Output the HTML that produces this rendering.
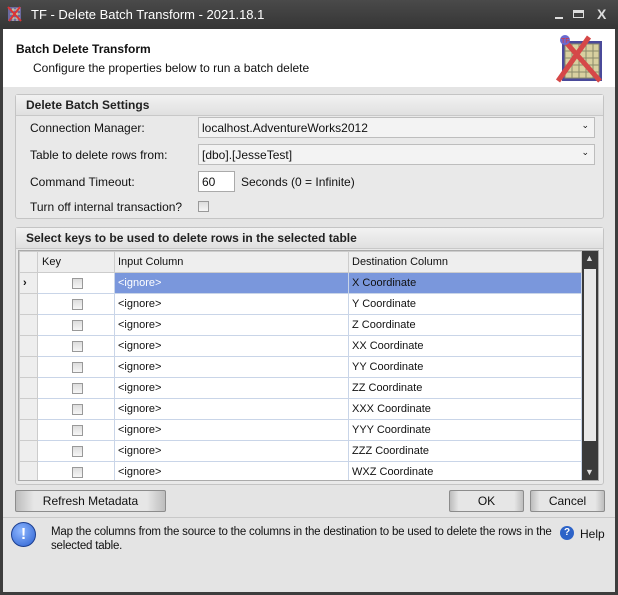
<!DOCTYPE html><html><head><style>
*{box-sizing:border-box;margin:0;padding:0}
body{width:618px;height:595px;background:#3d3d3d;font-family:"Liberation Sans",sans-serif;font-size:11px;color:#111;position:relative;overflow:hidden}
.a{position:absolute}
.title{left:0;top:0;width:618px;height:29px;background:linear-gradient(#4a4a4a,#353535);color:#fff;font-size:13px}
.main{left:3px;top:29px;width:612px;height:563px;background:#e4e4e4}
.hdr{left:3px;top:29px;width:612px;height:58px;background:#fff}
.grp{border:1px solid #c4c4c4;background:#e9e9e9;border-radius:3px}
.gh{background:linear-gradient(#f2f2f2,#e0e0e0);border-bottom:1px solid #c8c8c8;font-weight:bold;font-size:12px;padding:3px 10px;color:#222}
.combo{background:#f3f3f3;border:1px solid #bdbdbd;padding:3px 3px}
.btn{border:1px solid #8c8c8c;background:linear-gradient(90deg,#bdbdbd,#e6e6e6 12%,#e6e6e6 88%,#bdbdbd);text-align:center;line-height:20px;font-size:12px;border-radius:2px}
table{border-collapse:collapse;font-size:11px}
td{height:21px;border:1px solid #c9d5e8;padding-left:3px;background:#fff;line-height:12px;padding-top:0;padding-bottom:0}
td.rh{background:#eee;border-color:#ccc}
.cb{display:inline-block;width:11px;height:11px;border:1px solid #999;background:linear-gradient(#ddd,#f6f6f6);vertical-align:middle}
</style></head><body>
<div class="a title"><svg class="a" style="left:6px;top:5px" width="16" height="17"><rect x="2" y="2" width="13" height="14" fill="#6c6aa0"/><path d="M4 5h10M4 9h10M4 13h10M7 3v13M11 3v13" stroke="#d9d3a8"/><path d="M2 2L15 16M14 2L3 16" stroke="#d33" stroke-width="2"/></svg><span class="a" style="left:31px;top:7px">TF - Delete Batch Transform - 2021.18.1</span>
<span class="a" style="left:555px;top:8px;width:8px;height:11px;border-bottom:2px solid #ddd"></span><span class="a" style="left:573px;top:10px;width:11px;height:8px;border:1px solid #ddd;border-top-width:3px"></span><span class="a" style="left:597px;top:6px;font-size:14px;color:#ddd;font-weight:bold">X</span></div>
<div class="a main"></div>
<div class="a hdr"></div>
<div class="a" style="left:16px;top:42px;font-weight:bold;font-size:12px">Batch Delete Transform</div>
<div class="a" style="left:33px;top:61px;font-size:12px">Configure the properties below to run a batch delete</div>
<svg class="a" style="left:555px;top:33px" width="50" height="50"><rect x="7" y="8" width="40" height="40" fill="#4a4a9a"/><g stroke="#8a8a6a"><rect x="10" y="11" width="34" height="34" fill="#d8d0a0"/><path d="M10 18h34M10 25h34M10 32h34M10 39h34M17 11v34M24 11v34M31 11v34M38 11v34"/></g><path d="M3 48L34 4M8 6L45 48" stroke="#d54848" stroke-width="5"/><circle cx="10" cy="7" r="5" fill="#6a6ad0"/><text x="6" y="10" font-size="7" fill="#d33">TF</text></svg>
<div class="a grp" style="left:15px;top:94px;width:589px;height:125px"><div class="gh">Delete Batch Settings</div></div>
<div class="a" style="left:30px;top:121px;font-size:12px">Connection Manager:</div>
<div class="a combo" style="left:198px;top:117px;width:397px;height:21px;font-size:12px">localhost.AdventureWorks2012<span class="a" style="right:5px;top:2px;font-size:9px">&#8964;</span></div>
<div class="a" style="left:30px;top:148px;font-size:12px">Table to delete rows from:</div>
<div class="a combo" style="left:198px;top:144px;width:397px;height:21px;font-size:12px">[dbo].[JesseTest]<span class="a" style="right:5px;top:2px;font-size:9px">&#8964;</span></div>
<div class="a" style="left:30px;top:175px;font-size:12px">Command Timeout:</div>
<div class="a" style="left:198px;top:171px;width:37px;height:21px;background:#fff;border:1px solid #aaa;padding:3px;font-size:12px">60</div>
<div class="a" style="left:241px;top:175px;font-size:12px">Seconds (0 = Infinite)</div>
<div class="a" style="left:30px;top:200px;font-size:12px">Turn off internal transaction?</div>
<span class="a cb" style="left:198px;top:201px"></span>
<div class="a grp" style="left:15px;top:227px;width:589px;height:258px"><div class="gh">Select keys to be used to delete rows in the selected table</div></div>
<div class="a" style="left:18px;top:250px;width:581px;height:231px;background:#fff;border:1px solid #aaa;overflow:hidden">
<table style="width:563px"><tr style="background:#eee"><td class="rh" style="width:18px;height:19px"></td><td class="rh" style="width:77px;padding-left:4px">Key</td><td class="rh" style="width:234px">Input Column</td><td class="rh">Destination Column</td></tr>
<tr><td class="rh" style="font-weight:bold">›</td><td style="text-align:center"><span class="cb"></span></td><td style="background:#7a97dc;color:#fff">&lt;ignore&gt;</td><td style="background:#7a97dc">X Coordinate</td></tr>
<tr><td class="rh"></td><td style="text-align:center"><span class="cb"></span></td><td>&lt;ignore&gt;</td><td>Y Coordinate</td></tr>
<tr><td class="rh"></td><td style="text-align:center"><span class="cb"></span></td><td>&lt;ignore&gt;</td><td>Z Coordinate</td></tr>
<tr><td class="rh"></td><td style="text-align:center"><span class="cb"></span></td><td>&lt;ignore&gt;</td><td>XX Coordinate</td></tr>
<tr><td class="rh"></td><td style="text-align:center"><span class="cb"></span></td><td>&lt;ignore&gt;</td><td>YY Coordinate</td></tr>
<tr><td class="rh"></td><td style="text-align:center"><span class="cb"></span></td><td>&lt;ignore&gt;</td><td>ZZ Coordinate</td></tr>
<tr><td class="rh"></td><td style="text-align:center"><span class="cb"></span></td><td>&lt;ignore&gt;</td><td>XXX Coordinate</td></tr>
<tr><td class="rh"></td><td style="text-align:center"><span class="cb"></span></td><td>&lt;ignore&gt;</td><td>YYY Coordinate</td></tr>
<tr><td class="rh"></td><td style="text-align:center"><span class="cb"></span></td><td>&lt;ignore&gt;</td><td>ZZZ Coordinate</td></tr>
<tr><td class="rh"></td><td style="text-align:center"><span class="cb"></span></td><td>&lt;ignore&gt;</td><td>WXZ Coordinate</td></tr></table>
<div class="a" style="right:0;top:0;width:16px;height:229px;background:#3a3a3a"><div class="a" style="left:2px;top:18px;width:12px;height:172px;background:#e8e8e8"></div><span class="a" style="left:3px;top:2px;color:#ddd;font-size:9px">▲</span><span class="a" style="left:3px;bottom:3px;color:#ddd;font-size:9px">▼</span></div></div>
<div class="a btn" style="left:15px;top:490px;width:151px;height:22px">Refresh Metadata</div>
<div class="a btn" style="left:449px;top:490px;width:75px;height:22px">OK</div>
<div class="a btn" style="left:530px;top:490px;width:75px;height:22px">Cancel</div>
<div class="a" style="left:3px;top:517px;width:612px;border-top:1px solid #c8c8c8"></div>
<div class="a" style="left:11px;top:522px;width:25px;height:25px;border-radius:50%;background:radial-gradient(circle at 40% 35%,#8fb8ff,#2a5fd0);border:1px solid #1c3f90;color:#fff;font-weight:bold;font-size:16px;text-align:center;line-height:23px">!</div>
<div class="a" style="left:51px;top:525px;width:500px;font-size:11.5px;line-height:14px;letter-spacing:-0.2px;white-space:nowrap">Map the columns from the source to the columns in the destination to be used to delete the rows in the<br>selected table.</div>
<div class="a" style="left:560px;top:526px;width:14px;height:14px;border-radius:50%;background:#2d63c8;color:#fff;font-size:10px;font-weight:bold;text-align:center;line-height:14px">?</div>
<div class="a" style="left:580px;top:527px;font-size:12px">Help</div>
</body></html>
